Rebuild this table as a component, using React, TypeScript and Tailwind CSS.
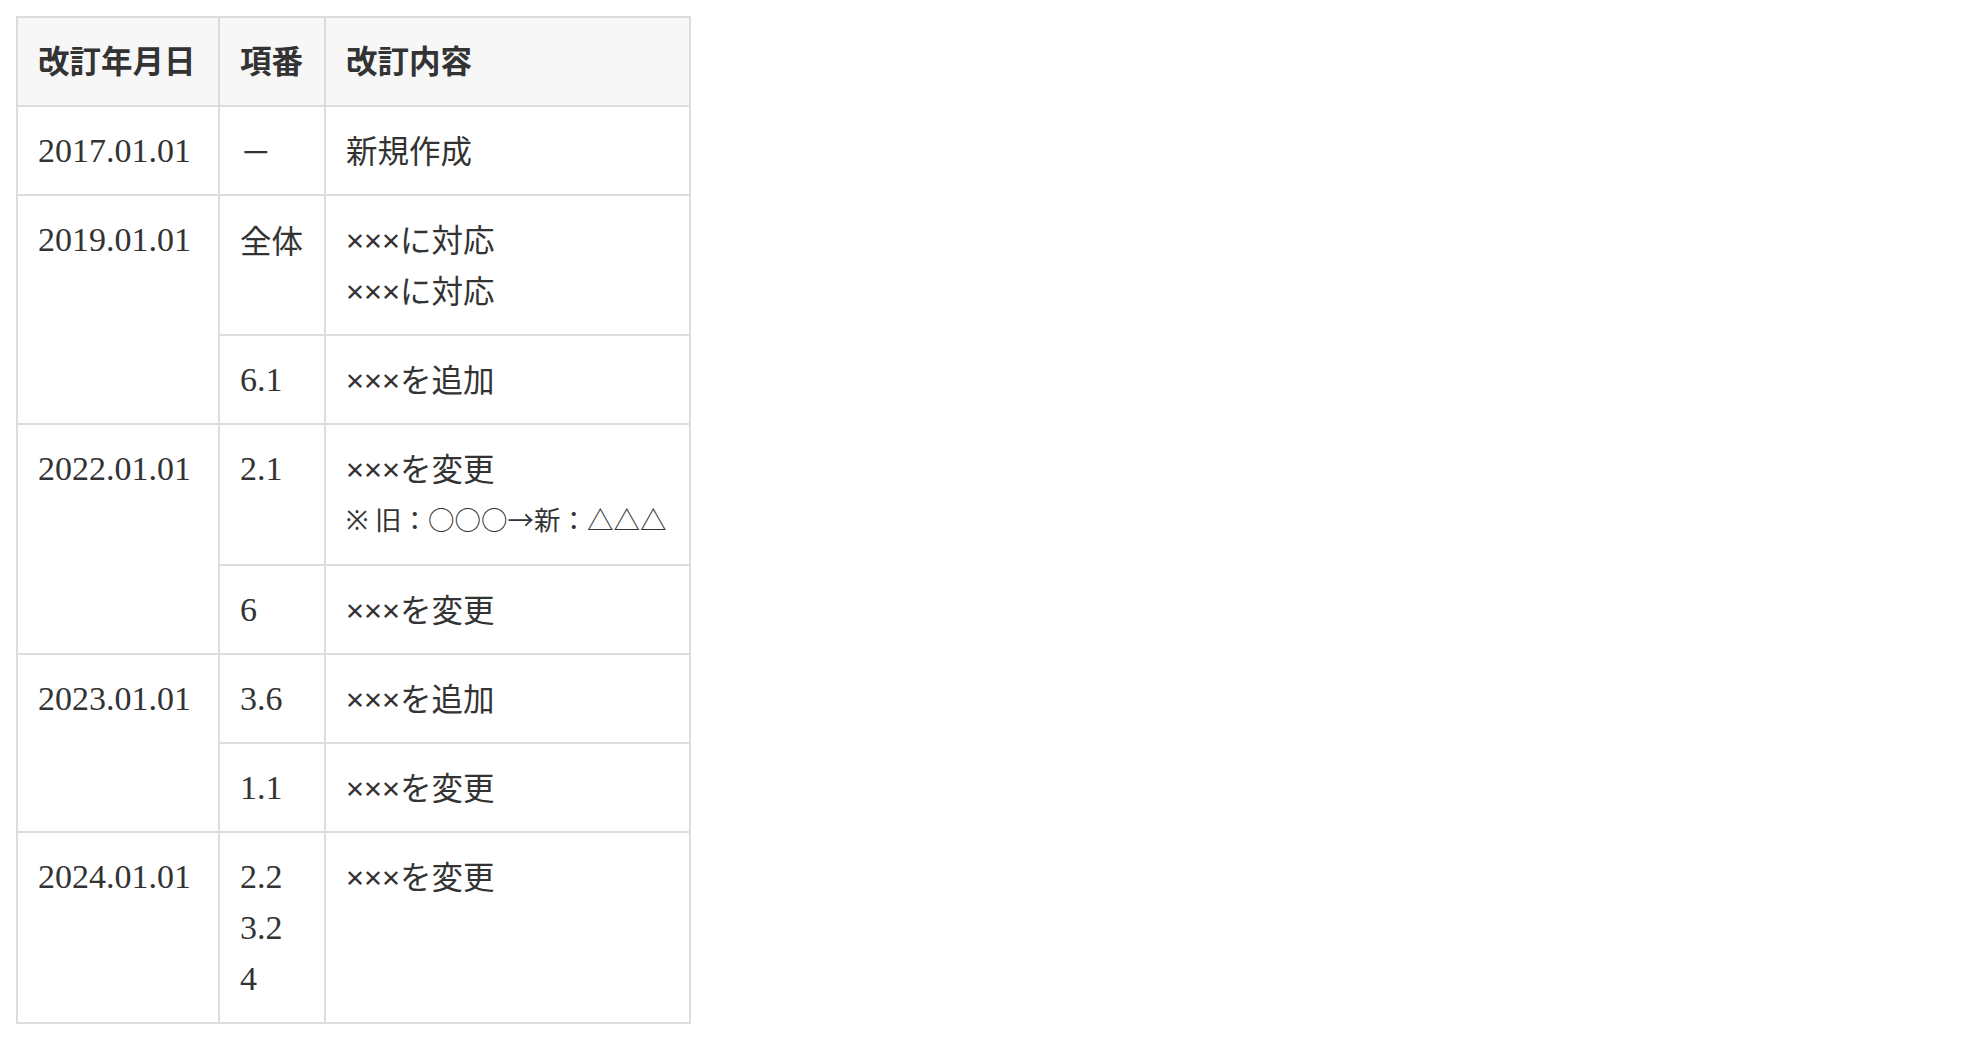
const serif = "font-['Liberation_Serif','Noto_Sans_CJK_JP',serif] text-[34px]";
const sans = "font-['Noto_Sans_CJK_JP',sans-serif] text-[31.5px]";
const body = "font-['Noto_Sans','Noto_Sans_CJK_JP',sans-serif] text-[31.5px]";

type Item = { no: string[]; no_sans?: boolean; content: string[]; note?: string };
type Rev = { date: string; items: Item[] };

const revisions: Rev[] = [
  { date: "2017.01.01", items: [{ no: ["－"], no_sans: true, content: ["新規作成"] }] },
  {
    date: "2019.01.01",
    items: [
      { no: ["全体"], no_sans: true, content: ["×××に対応", "×××に対応"] },
      { no: ["6.1"], content: ["×××を追加"] },
    ],
  },
  {
    date: "2022.01.01",
    items: [
      { no: ["2.1"], content: ["×××を変更"], note: "※ 旧：○○○→新：△△△" },
      { no: ["6"], content: ["×××を変更"] },
    ],
  },
  {
    date: "2023.01.01",
    items: [
      { no: ["3.6"], content: ["×××を追加"] },
      { no: ["1.1"], content: ["×××を変更"] },
    ],
  },
  { date: "2024.01.01", items: [{ no: ["2.2", "3.2", "4"], content: ["×××を変更"] }] },
];

const cell = "border-2 border-[#dddddd] align-top px-5 py-[18px] leading-[51.1px] text-[#333333]";

export default function App() {
  return (
    <div className="min-h-screen bg-white p-4">
      <table className="border-collapse table-fixed w-[675px]">
        <colgroup>
          <col className="w-[202px]" />
          <col className="w-[106px]" />
          <col />
        </colgroup>
        <thead>
          <tr className="bg-[#f7f7f7]">
            {["改訂年月日", "項番", "改訂内容"].map((h) => (
              <th key={h} className={`${cell} ${sans} text-left font-bold !pt-[16px] !pb-[20px]`}>
                {h}
              </th>
            ))}
          </tr>
        </thead>
        <tbody>
          {revisions.map((rev) =>
            rev.items.map((item, i) => (
              <tr key={rev.date + i}>
                {i === 0 && (
                  <td rowSpan={rev.items.length} className={`${cell} ${serif}`}>
                    {rev.date}
                  </td>
                )}
                <td className={`${cell} ${item.no_sans ? sans : serif}`}>
                  {item.no.map((n) => (
                    <div key={n}>{n}</div>
                  ))}
                </td>
                <td className={`${cell} ${body}`}>
                  {item.content.map((c, j) => (
                    <div key={j}>{c}</div>
                  ))}
                  {item.note && <div className="text-[26.5px]">{item.note}</div>}
                </td>
              </tr>
            ))
          )}
        </tbody>
      </table>
    </div>
  );
}
